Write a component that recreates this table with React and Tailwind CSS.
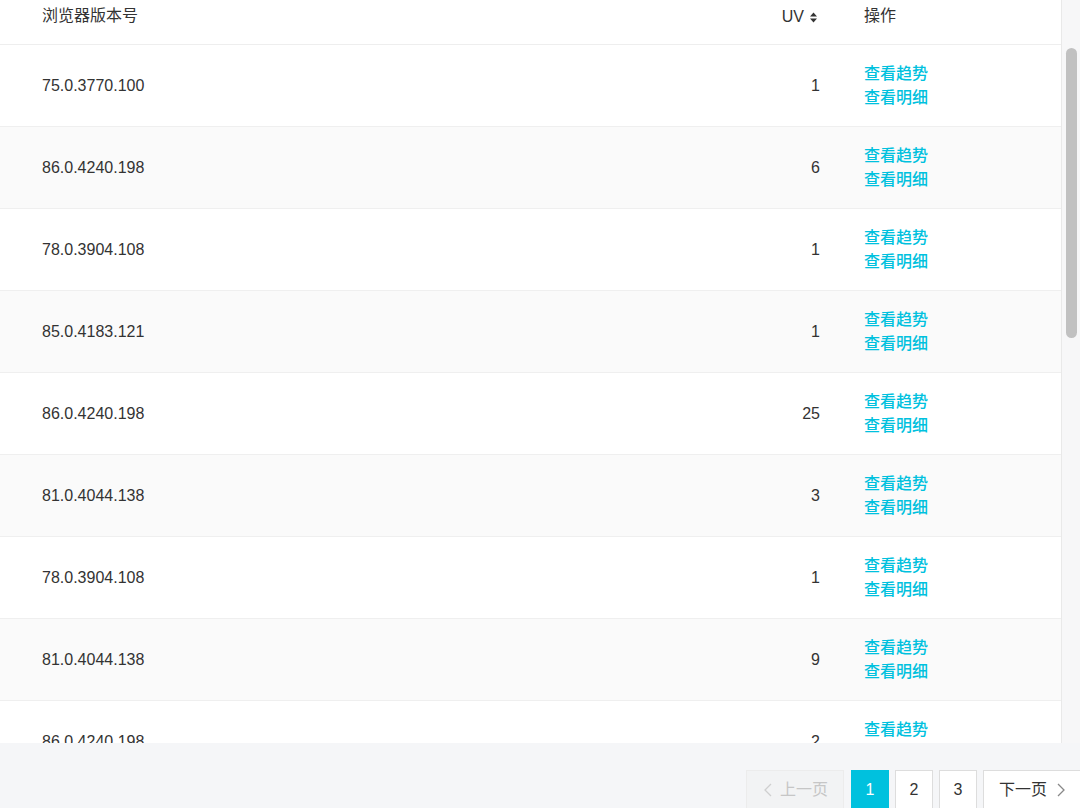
import React from "react";

const ROWS = [
  { version: "75.0.3770.100", uv: 1 },
  { version: "86.0.4240.198", uv: 6 },
  { version: "78.0.3904.108", uv: 1 },
  { version: "85.0.4183.121", uv: 1 },
  { version: "86.0.4240.198", uv: 25 },
  { version: "81.0.4044.138", uv: 3 },
  { version: "78.0.3904.108", uv: 1 },
  { version: "81.0.4044.138", uv: 9 },
  { version: "86.0.4240.198", uv: 2 },
];

function SortIcon() {
  return (
    <svg width="9" height="11" viewBox="0 0 9 11" className="ml-[5px]">
      <path d="M4.5 0.5 L8 4.5 L1 4.5 Z" fill="#333" />
      <path d="M4.5 10.5 L8 6.5 L1 6.5 Z" fill="#333" />
    </svg>
  );
}

function Chevron({ dir, color }) {
  const d = dir === "left" ? "M9 2 L3 8 L9 14" : "M3 2 L9 8 L3 14";
  return (
    <svg width="12" height="16" viewBox="0 0 12 16">
      <path d={d} fill="none" stroke={color} strokeWidth="1.3" />
    </svg>
  );
}

export default function App() {
  return (
    <div
      className="w-[1080px] h-[808px] bg-[#f5f6f8] flex flex-col overflow-hidden text-[16px] text-[#333]"
      style={{ fontFamily: '"Liberation Sans", "Noto Sans CJK SC", sans-serif' }}
    >
      <div className="h-[743px] flex shrink-0">
        {/* table */}
        <div className="flex-1 bg-white overflow-hidden">
          <div className="grid grid-cols-[700px_120px_1fr] h-[45px] border-b border-[#eeeeee] items-start pt-[4px]">
            <div className="pl-[42px]">浏览器版本号</div>
            <div className="flex items-center justify-end pr-[2px] pt-[1px]">
              <span>UV</span>
              <SortIcon />
            </div>
            <div className="pl-[44px]">操作</div>
          </div>

          {ROWS.map((row, i) => (
            <div
              key={i}
              className={`grid grid-cols-[700px_120px_1fr] h-[82px] border-b border-[#efefef] items-center ${
                i % 2 === 1 ? "bg-[#fafafa]" : "bg-white"
              }`}
            >
              <div className="pl-[42px]">{row.version}</div>
              <div className="text-right">{row.uv}</div>
              <div className="pl-[44px] flex flex-col leading-[24px] text-[#00c1de] font-medium">
                <a href="#">查看趋势</a>
                <a href="#">查看明细</a>
              </div>
            </div>
          ))}
        </div>

        {/* scrollbar */}
        <div className="w-[19px] bg-[#f7f7f8] border-l border-[#e9e9e9] pt-[48px] pl-[4px]">
          <div className="w-[11px] h-[290px] rounded-full bg-[#c1c1c1]" />
        </div>
      </div>

      {/* pagination */}
      <div className="flex-1 flex items-start pt-[27px] pl-[746px] gap-[6px] overflow-hidden">
        <button className="h-[40px] w-[98px] shrink-0 flex items-center justify-center gap-[6px] bg-[#f2f3f4] border border-[#ececec] text-[#c6c6c6]">
          <Chevron dir="left" color="#cfcfcf" />
          <span>上一页</span>
        </button>
        <button className="h-[40px] w-[38px] shrink-0 ml-[1px] flex items-center justify-center bg-[#00c1de] text-white">
          1
        </button>
        <button className="h-[40px] w-[38px] shrink-0 flex items-center justify-center bg-white border border-[#dddddd]">
          2
        </button>
        <button className="h-[40px] w-[38px] shrink-0 flex items-center justify-center bg-white border border-[#dddddd]">
          3
        </button>
        <button className="h-[40px] w-[104px] shrink-0 flex items-center justify-start pl-[15px] gap-[8px] bg-white border border-[#dddddd]">
          <span>下一页</span>
          <Chevron dir="right" color="#888" />
        </button>
      </div>
    </div>
  );
}
